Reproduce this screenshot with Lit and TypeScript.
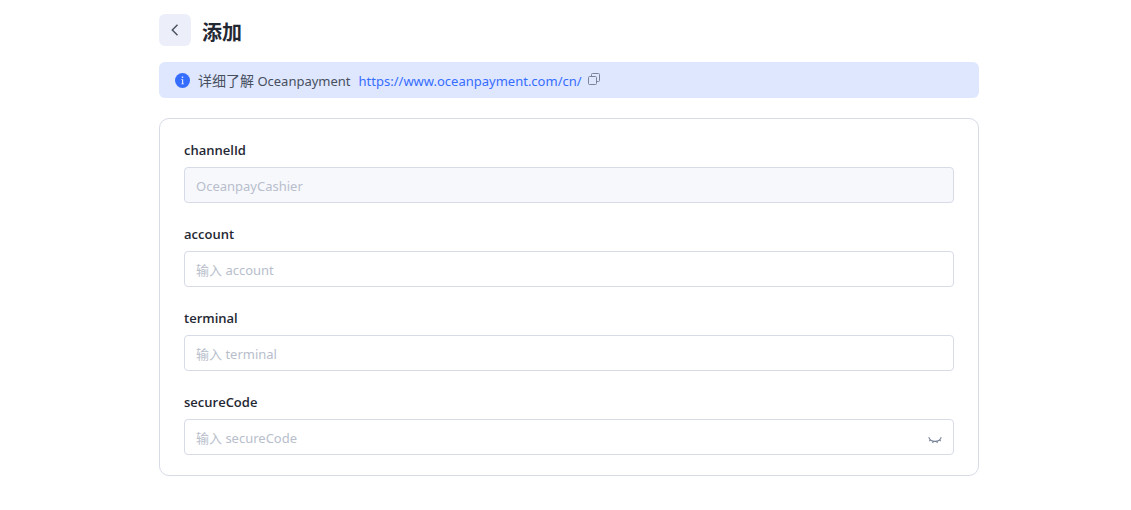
import { LitElement, html, css, nothing } from "lit";
import { customElement, property, state } from "lit/decorators.js";

@customElement("form-field")
class FormField extends LitElement {
  @property() name = "";
  @property() placeholder = "";
  @property({ type: Boolean }) disabled = false;
  @property({ type: Boolean }) secret = false;
  @state() private revealed = false;

  static styles = css`
    :host {
      display: block;
    }
    .label {
      display: block;
      margin-bottom: 6px;
      font-family: "Open Sans", "Noto Sans CJK SC", sans-serif;
      font-size: 13px;
      font-weight: 600;
      line-height: 22px;
      color: #242833;
    }
    .box {
      display: flex;
      align-items: center;
      height: 36px;
      box-sizing: border-box;
      border: 1px solid #d7dbe7;
      border-radius: 4px;
      background: #fff;
      padding: 0 11px;
    }
    .box.disabled {
      background: #f7f8fc;
    }
    .input {
      flex: 1;
      min-width: 0;
      height: 34px;
      padding: 1px 0 0;
      box-sizing: border-box;
      border: 0;
      outline: 0;
      background: transparent;
      font: inherit;
      font-size: 13px;
      color: #242833;
    }
    .input::placeholder {
      color: #b8becc;
      opacity: 1;
    }
    .toggle {
      display: flex;
      padding: 6px 0 0;
      border: 0;
      background: none;
      cursor: pointer;
      color: #7a8499;
    }
  `;

  render() {
    return html`
      <label class="label" for="control">${this.name}</label>
      <div class="box ${this.disabled ? "disabled" : ""}">
        <input
          class="input"
          id="control"
          type=${this.secret && !this.revealed ? "password" : "text"}
          placeholder=${this.placeholder}
          ?disabled=${this.disabled}
        />
        ${this.secret
          ? html`<button
              class="toggle"
              type="button"
              aria-label="显示"
              @click=${() => (this.revealed = !this.revealed)}
            >
              <svg width="14" height="14" viewBox="0 0 14 14" fill="none" stroke="currentColor" stroke-width="1.1">
                <path d="M0.7 4.2C1.8 6.8 4.2 8.4 7 8.4s5.2-1.6 6.3-4.2M2.8 6.7L1.2 8.2M5.3 8.2L4.6 10M8.7 8.2L9.4 10M11.2 6.7l1.6 1.5" />
              </svg>
            </button>`
          : nothing}
      </div>
    `;
  }
}

@customElement("app-root")
class AppRoot extends LitElement {
  static styles = css`
    :host {
      display: block;
      padding: 14px 0 24px 7px;
      background: #fff;
      font-family: "Noto Sans", "Noto Sans CJK SC", sans-serif;
      font-size: 13px;
      line-height: 22px;
      color: #474f5e;
    }
    .page {
      max-width: 820px;
      margin: 0 auto;
    }
    .header {
      display: flex;
      align-items: center;
      gap: 11px;
      margin-bottom: 16px;
    }
    .back {
      display: flex;
      align-items: center;
      justify-content: center;
      width: 32px;
      height: 32px;
      padding: 0;
      border: 0;
      border-radius: 6px;
      background: #eceffa;
      color: #474f5e;
      cursor: pointer;
    }
    .title {
      margin: 0;
      padding-top: 6px;
      font-size: 20px;
      font-weight: 700;
      line-height: 26px;
      color: #242833;
    }
    .notice {
      display: flex;
      align-items: center;
      height: 36px;
      box-sizing: border-box;
      margin-bottom: 20px;
      padding: 0 16px;
      border-radius: 6px;
      background: #dfe7ff;
    }
    .info {
      margin-right: 8px;
    }
    .text {
      padding-top: 2px;
    }
    .cjk {
      font-size: 14px;
    }
    .link {
      display: flex;
      align-items: center;
      gap: 6px;
      margin-left: 8px;
      color: #356dff;
      text-decoration: none;
    }
    .copy {
      margin-bottom: 2px;
      color: #7a8499;
    }
    .card {
      display: flex;
      flex-direction: column;
      gap: 20px;
      padding: 20px 24px;
      border: 1px solid #d7dbe7;
      border-radius: 10px;
    }
  `;

  render() {
    return html`
      <main class="page">
        <header class="header">
          <button class="back" type="button" aria-label="返回">
            <svg width="16" height="16" viewBox="0 0 16 16" fill="none" stroke="currentColor" stroke-width="1.4">
              <path d="M10.5 2.8L5.3 8l5.2 5.2" />
            </svg>
          </button>
          <h1 class="title">添加</h1>
        </header>
        <div class="notice">
          <svg class="info" width="15" height="15" viewBox="0 0 15 15">
            <circle cx="7.5" cy="7.5" r="7.5" fill="#356dff" />
            <path d="M6.8 3.5h1.4v1.5H6.8zM6.3 6.2h1.9v4.2h.7v.8H6.3v-.8h.7V7h-.7z" fill="#dfe7ff" />
          </svg>
          <span class="text"><span class="cjk">详细了解</span> Oceanpayment</span>
          <a class="link" href="https://www.oceanpayment.com/cn/">
            <span class="text">https://www.oceanpayment.com/cn/</span>
            <svg class="copy" width="12" height="12" viewBox="0 0 12 12" fill="none" stroke="currentColor">
              <rect x="0.5" y="3.5" width="8" height="8" rx="1" />
              <path d="M3.5 3.5v-2a1 1 0 0 1 1-1h6a1 1 0 0 1 1 1v6a1 1 0 0 1-1 1h-2" />
            </svg>
          </a>
        </div>
        <form class="card">
          <form-field name="channelId" placeholder="OceanpayCashier" disabled></form-field>
          <form-field name="account" placeholder="输入 account"></form-field>
          <form-field name="terminal" placeholder="输入 terminal"></form-field>
          <form-field name="secureCode" placeholder="输入 secureCode" secret></form-field>
        </form>
      </main>
    `;
  }
}
